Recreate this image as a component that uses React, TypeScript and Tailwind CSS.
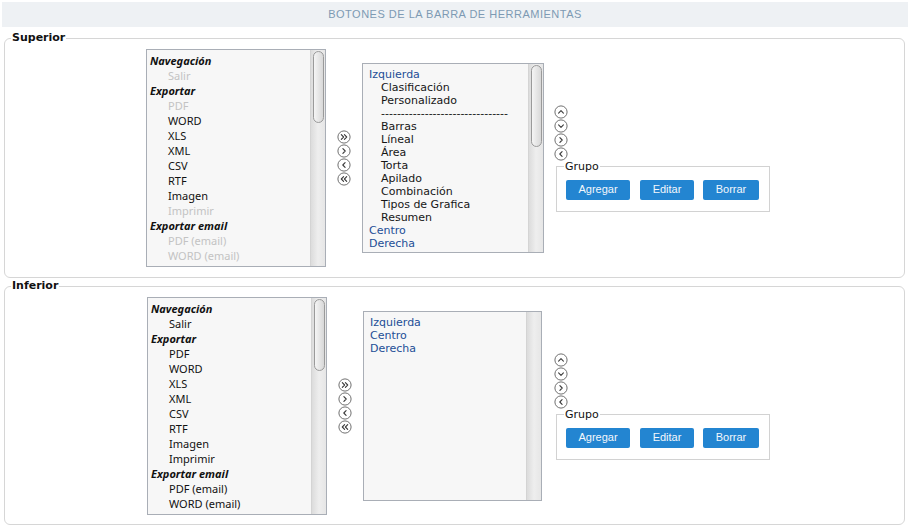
import React from "react";

type LItem = { label: string; group?: boolean; disabled?: boolean };
type RItem = { label: string; top?: boolean };

const supLeft: LItem[] = [
  { label: "Navegación", group: true },
  { label: "Salir", disabled: true },
  { label: "Exportar", group: true },
  { label: "PDF", disabled: true },
  { label: "WORD" },
  { label: "XLS" },
  { label: "XML" },
  { label: "CSV" },
  { label: "RTF" },
  { label: "Imagen" },
  { label: "Imprimir", disabled: true },
  { label: "Exportar email", group: true },
  { label: "PDF (email)", disabled: true },
  { label: "WORD (email)", disabled: true },
];

const infLeft: LItem[] = [
  { label: "Navegación", group: true },
  { label: "Salir" },
  { label: "Exportar", group: true },
  { label: "PDF" },
  { label: "WORD" },
  { label: "XLS" },
  { label: "XML" },
  { label: "CSV" },
  { label: "RTF" },
  { label: "Imagen" },
  { label: "Imprimir" },
  { label: "Exportar email", group: true },
  { label: "PDF (email)" },
  { label: "WORD (email)" },
];

const supRight: RItem[] = [
  { label: "Izquierda", top: true },
  { label: "Clasificación" },
  { label: "Personalizado" },
  { label: "--------------------------------" },
  { label: "Barras" },
  { label: "Líneal" },
  { label: "Área" },
  { label: "Torta" },
  { label: "Apilado" },
  { label: "Combinación" },
  { label: "Tipos de Grafica" },
  { label: "Resumen" },
  { label: "Centro", top: true },
  { label: "Derecha", top: true },
];

const infRight: RItem[] = [
  { label: "Izquierda", top: true },
  { label: "Centro", top: true },
  { label: "Derecha", top: true },
];

function CircleIcon({ d }: { d: string }) {
  return (
    <svg width="14" height="14" viewBox="0 0 14 14" className="block">
      <circle cx="7" cy="7" r="6.1" fill="#ffffff" stroke="#707070" strokeWidth="1" />
      <path d={d} fill="none" stroke="#3a3a3a" strokeWidth="1.1" strokeLinecap="round" strokeLinejoin="round" />
    </svg>
  );
}

const D_RR = "M4.3 4.6 L6.6 7 L4.3 9.4 M7.4 4.6 L9.7 7 L7.4 9.4";
const D_R = "M5.9 4.6 L8.2 7 L5.9 9.4";
const D_L = "M8.1 4.6 L5.8 7 L8.1 9.4";
const D_LL = "M6.6 4.6 L4.3 7 L6.6 9.4 M9.7 4.6 L7.4 7 L9.7 9.4";
const D_UP = "M4.6 8.1 L7 5.7 L9.4 8.1";
const D_DOWN = "M4.6 5.9 L7 8.3 L9.4 5.9";

function MoveArrows() {
  return (
    <div className="flex flex-col w-[14px]">
      <CircleIcon d={D_RR} />
      <CircleIcon d={D_R} />
      <CircleIcon d={D_L} />
      <CircleIcon d={D_LL} />
    </div>
  );
}

function OrderArrows() {
  return (
    <div className="flex flex-col w-[14px]">
      <CircleIcon d={D_UP} />
      <CircleIcon d={D_DOWN} />
      <CircleIcon d={D_R} />
      <CircleIcon d={D_L} />
    </div>
  );
}

function Scrollbar({ thumb }: { thumb: number }) {
  return (
    <div className="w-[15px] h-full shrink-0 border-l border-[#d4d4d4] bg-linear-to-r from-[#dcdcdc] via-[#eeeeee] to-[#e6e6e6] flex justify-center">
      {thumb > 0 && (
        <div
          className="mt-[1px] w-[11px] rounded-full border border-[#9a9a9a] bg-linear-to-r from-[#f5f5f5] to-[#d8d8d8]"
          style={{ height: thumb }}
        />
      )}
    </div>
  );
}

function LeftList({ items, thumb }: { items: LItem[]; thumb: number }) {
  return (
    <div className="flex w-[180px] h-[218px] border border-[#a9aeb6] bg-[#f7f7f7] shrink-0">
      <div className="flex-1 overflow-hidden pt-[3px] font-['Noto_Sans',sans-serif] text-[11px] leading-[15px]">
        {items.map((it, i) =>
          it.group ? (
            <div key={i} className="pl-[3px] font-bold italic text-[#111111] whitespace-nowrap">
              {it.label}
            </div>
          ) : (
            <div
              key={i}
              className={
                it.disabled
                  ? "pl-[21px] text-[#c3c3c3] whitespace-nowrap"
                  : "pl-[21px] text-[#111111] whitespace-nowrap"
              }
            >
              {it.label}
            </div>
          )
        )}
      </div>
      <Scrollbar thumb={thumb} />
    </div>
  );
}

function RightList({ items, thumb, w }: { items: RItem[]; thumb: number; w: string }) {
  return (
    <div className={w + " flex h-[190px] border border-[#a9aeb6] bg-[#f7f7f7] shrink-0"}>
      <div className="flex-1 overflow-hidden pt-[4px] pl-[6px] font-['DejaVu_Sans',sans-serif] text-[11px] leading-[13px]">
        {items.map((it, i) =>
          it.top ? (
            <div key={i} className="text-[#234e96] whitespace-nowrap">
              {it.label}
            </div>
          ) : (
            <div key={i} className="pl-[12px] text-[#161616] whitespace-nowrap">
              {it.label}
            </div>
          )
        )}
      </div>
      <Scrollbar thumb={thumb} />
    </div>
  );
}

function Grupo() {
  return (
    <fieldset className="ml-[2px] w-[214px] border border-[#d2d2d2] p-0 m-0">
      <legend className="ml-[7px] px-[1px] font-['DejaVu_Sans',sans-serif] text-[11px] leading-[12px] text-[#111111]">
        Grupo
      </legend>
      <div className="flex pl-[9px] pt-[7px] pb-[11px] font-['Liberation_Sans',sans-serif] text-[11px] text-[#f2f7fc]">
        <button className="w-[64px] h-[20px] rounded-[2px] bg-[#2385d1] flex items-center justify-center">
          Agregar
        </button>
        <button className="ml-[10px] w-[54px] h-[20px] rounded-[2px] bg-[#2385d1] flex items-center justify-center">
          Editar
        </button>
        <button className="ml-[9px] w-[56px] h-[20px] rounded-[2px] bg-[#2385d1] flex items-center justify-center">
          Borrar
        </button>
      </div>
    </fieldset>
  );
}

export default function App() {
  return (
    <div className="w-[911px] h-[526px] overflow-hidden bg-white font-['DejaVu_Sans',sans-serif] text-[11px] text-[#111111]">
      <div className="ml-[2px] mt-[2px] w-[906px] h-[25px] bg-[#eef1f4] flex items-center justify-center font-['Liberation_Sans',sans-serif] text-[11px] tracking-[0.5px] text-[#7d9ab3]">
        BOTONES DE LA BARRA DE HERRAMIENTAS
      </div>

      <fieldset className="ml-[4px] mt-[4px] w-[901px] border border-[#d6d6d6] rounded-[6px] p-0 pb-[10px]">
        <legend className="ml-[6px] px-[1px] font-bold leading-[14px] text-[#111111]">Superior</legend>
        <div className="flex items-center pt-[4px]">
          <div className="ml-[141px]">
            <LeftList items={supLeft} thumb={72} />
          </div>
          <div className="ml-[11px]">
            <MoveArrows />
          </div>
          <div className="ml-[11px]">
            <RightList items={supRight} thumb={82} w="w-[182px]" />
          </div>
          <div className="ml-[10px] flex flex-col">
            <OrderArrows />
            <Grupo />
          </div>
        </div>
      </fieldset>

      <fieldset className="ml-[4px] mt-[1px] w-[901px] border border-[#d6d6d6] rounded-[6px] p-0 pb-[9px]">
        <legend className="ml-[6px] px-[1px] font-bold leading-[14px] text-[#111111]">Inferior</legend>
        <div className="flex items-center pt-[4px]">
          <div className="ml-[142px]">
            <LeftList items={infLeft} thumb={72} />
          </div>
          <div className="ml-[11px]">
            <MoveArrows />
          </div>
          <div className="ml-[11px]">
            <RightList items={infRight} thumb={0} w="w-[179px]" />
          </div>
          <div className="ml-[12px] flex flex-col">
            <OrderArrows />
            <Grupo />
          </div>
        </div>
      </fieldset>
    </div>
  );
}
